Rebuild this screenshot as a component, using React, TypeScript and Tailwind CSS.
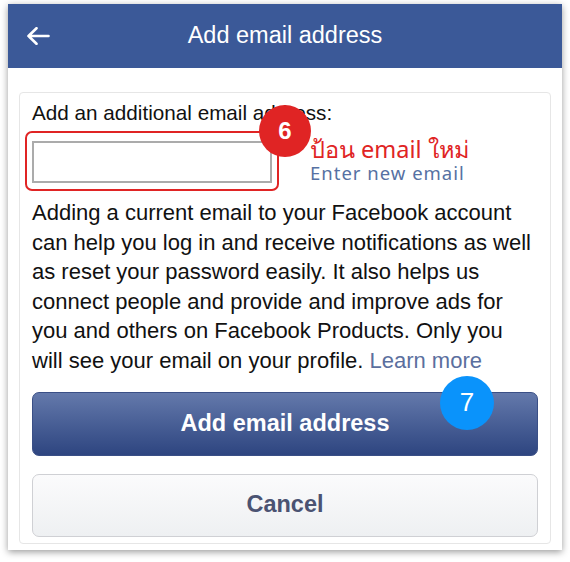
const BackArrow = () => (
  <svg width="24" height="18" viewBox="0 0 24 18" fill="none">
    <path
      d="M22.5 9H2.5M10.5 1.2L2.5 9l8 7.8"
      stroke="white"
      strokeWidth="2.6"
      strokeLinecap="round"
      strokeLinejoin="round"
    />
  </svg>
);

export default function App() {
  return (
    <div className="min-h-screen bg-white pt-[4px] pl-[8px] font-['Liberation_Sans',Arial,sans-serif]">
      <div className="w-[554px] bg-white shadow-[0_2px_7px_rgba(0,0,0,0.4)]">
        {/* Header */}
        <div className="relative flex h-[64px] items-center justify-center bg-[#3b5998]">
          <div className="absolute left-[18px] top-[23px]">
            <BackArrow />
          </div>
          <span className="text-[23.5px] text-white">Add email address</span>
        </div>

        {/* Body */}
        <div className="px-[11px] pt-[24px] pb-[6px]">
          <div className="rounded-[4px] border border-[#e6e6e6] px-[12px] pt-[8px] pb-[6px]">
            <div className="text-[20.7px] leading-[24px] text-[#111]">
              Add an additional email address:
            </div>

            <div className="mt-[6px] flex items-start">
              <div className="relative -ml-[7px] h-[60px] w-[254px] shrink-0 rounded-[7px] border-2 border-[#e02424] pl-[5px] pt-[8px]">
                <div className="h-[42px] w-[240px] border-2 border-[#ababab] bg-white" />
                <div className="absolute left-[232px] -top-[28px] flex h-[52px] w-[52px] items-center justify-center rounded-full bg-[#e02424] text-[24px] font-bold text-white">
                  6
                </div>
              </div>
              <div className="ml-[31px] flex flex-col pt-[5px] font-['Noto_Sans',sans-serif]">
                <span className="text-[23.5px] leading-[26px] text-[#e02424]">
                  ป้อน email ใหม่
                </span>
                <span className="text-[18.5px] leading-[22px] tracking-[1px] text-[#5671a3]">
                  Enter new email
                </span>
              </div>
            </div>

            <p className="mt-[7px] text-[22px] leading-[29.6px] text-[#111]">
              Adding a current email to your Facebook account can help you log in
              and receive notifications as well as reset your password easily. It
              also helps us connect people and provide and improve ads for you and
              others on Facebook Products. Only you will see your email on your
              profile. <span className="text-[#5b6f9e]">Learn more</span>
            </p>

            <button className="relative mt-[16px] flex h-[64px] w-full items-center justify-center rounded-[7px] border border-[#3a4f86] bg-gradient-to-b from-[#6479ab] to-[#2e4580] text-[23.5px] font-bold text-white">
              Add email address
              <span className="absolute left-[407px] -top-[17px] flex h-[54px] w-[54px] items-center justify-center rounded-full bg-[#0a93fb] text-[26px] font-normal text-white">
                7
              </span>
            </button>

            <button className="mt-[18px] flex h-[63px] w-full items-center justify-center rounded-[7px] border border-[#cfd0d4] bg-gradient-to-b from-[#fbfbfc] to-[#eef0f2] text-[23.5px] font-bold text-[#4b5372]">
              Cancel
            </button>
          </div>
        </div>
      </div>
    </div>
  );
}
